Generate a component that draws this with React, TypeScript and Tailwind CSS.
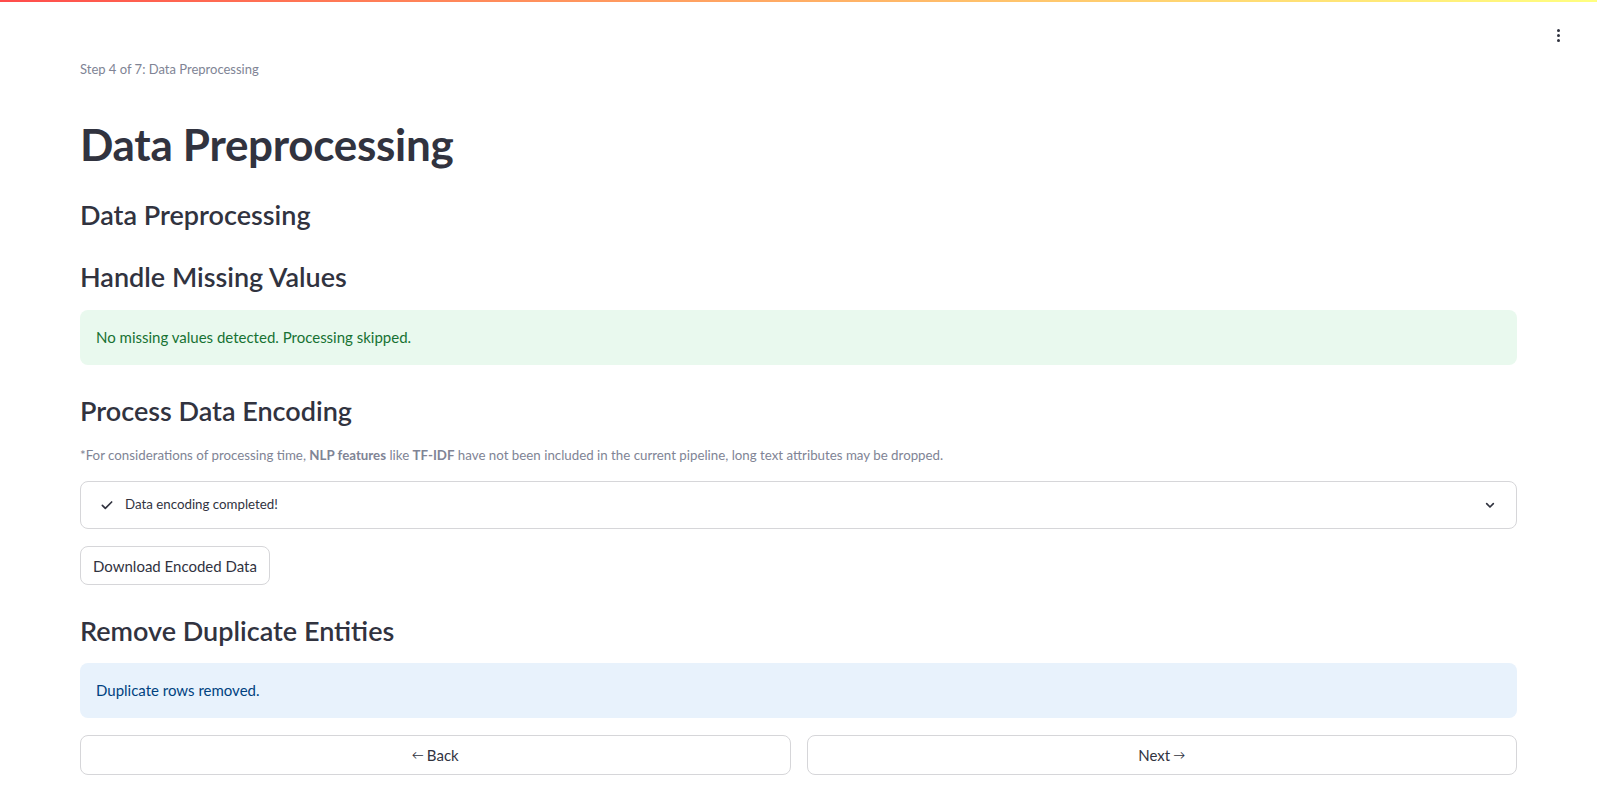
const font = { fontFamily: '"Source Sans Pro", Lato, "Noto Sans", sans-serif' }

function Check() {
  return (
    <svg width="16" height="16" viewBox="0 0 24 24" fill="none" stroke="#31333f" strokeWidth="2.5" strokeLinecap="round" strokeLinejoin="round">
      <path d="M5 12.5l4.5 4.5L19 7.5" />
    </svg>
  )
}

function Chevron() {
  return (
    <svg width="16" height="16" viewBox="0 0 24 24" fill="none" stroke="#31333f" strokeWidth="2.5" strokeLinecap="round" strokeLinejoin="round">
      <path d="M7 10l5 5 5-5" />
    </svg>
  )
}

export default function App() {
  return (
    <div className="relative bg-white text-[#31333f]" style={font}>
      <div className="h-[2px] w-full bg-gradient-to-r from-[#ff4b4b] to-[#ffff80]" />

      {/* top-right menu */}
      <div className="absolute right-[37px] top-[29px] flex flex-col gap-[2px]">
        <span className="h-[3px] w-[3px] rounded-full bg-[#31333f]" />
        <span className="h-[3px] w-[3px] rounded-full bg-[#31333f]" />
        <span className="h-[3px] w-[3px] rounded-full bg-[#31333f]" />
      </div>

      <div className="px-[80px] pt-[58px] pb-[48px]">
        <p className="text-[13px] text-[#808495]">Step 4 of 7: Data Preprocessing</p>

        <h1 className="mt-[38px] text-[44px] font-bold leading-[1.2] tracking-[-0.3px]">Data Preprocessing</h1>

        <h2 className="mt-[29px] text-[27px] font-semibold leading-[1.2]">Data Preprocessing</h2>

        <h2 className="mt-[29px] text-[27px] font-semibold leading-[1.2]">Handle Missing Values</h2>

        <div className="mt-[17px] flex h-[55px] items-center rounded-lg bg-[#e9f9ee] px-4 text-[15px] text-[#177233]">
          No missing values detected. Processing skipped.
        </div>

        <h2 className="mt-[30px] text-[27px] font-semibold leading-[1.2]">Process Data Encoding</h2>

        <p className="mt-[19px] text-[13.3px] text-[#808495]">
          *For considerations of processing time, <b className="font-bold">NLP features</b> like{' '}
          <b className="font-bold">TF-IDF</b> have not been included in the current pipeline, long text attributes may be dropped.
        </p>

        <div className="mt-[15px] flex h-[48px] items-center justify-between rounded-lg border border-[#d6d6d9] pl-[18px] pr-[18px]">
          <div className="flex items-center gap-[10px] text-[13.3px]">
            <Check />
            <span>Data encoding completed!</span>
          </div>
          <Chevron />
        </div>

        <button className="mt-[17px] h-[39px] rounded-lg border border-[#d6d6d9] bg-white px-[12px] text-[15px]">
          Download Encoded Data
        </button>

        <h2 className="mt-[30px] text-[27px] font-semibold leading-[1.2]">Remove Duplicate Entities</h2>

        <div className="mt-[15px] flex h-[55px] items-center rounded-lg bg-[#e8f2fc] px-4 text-[15px] text-[#004280]">
          Duplicate rows removed.
        </div>

        <div className="mt-[17px] grid grid-cols-2 gap-4">
          <button className="flex h-[40px] items-center justify-center gap-[3px] rounded-lg border border-[#d6d6d9] bg-white text-[15px]">
            <span className="text-[12px]">←</span>
            <span>Back</span>
          </button>
          <button className="flex h-[40px] items-center justify-center gap-[3px] rounded-lg border border-[#d6d6d9] bg-white text-[15px]">
            <span>Next</span>
            <span className="text-[12px]">→</span>
          </button>
        </div>
      </div>
    </div>
  )
}
